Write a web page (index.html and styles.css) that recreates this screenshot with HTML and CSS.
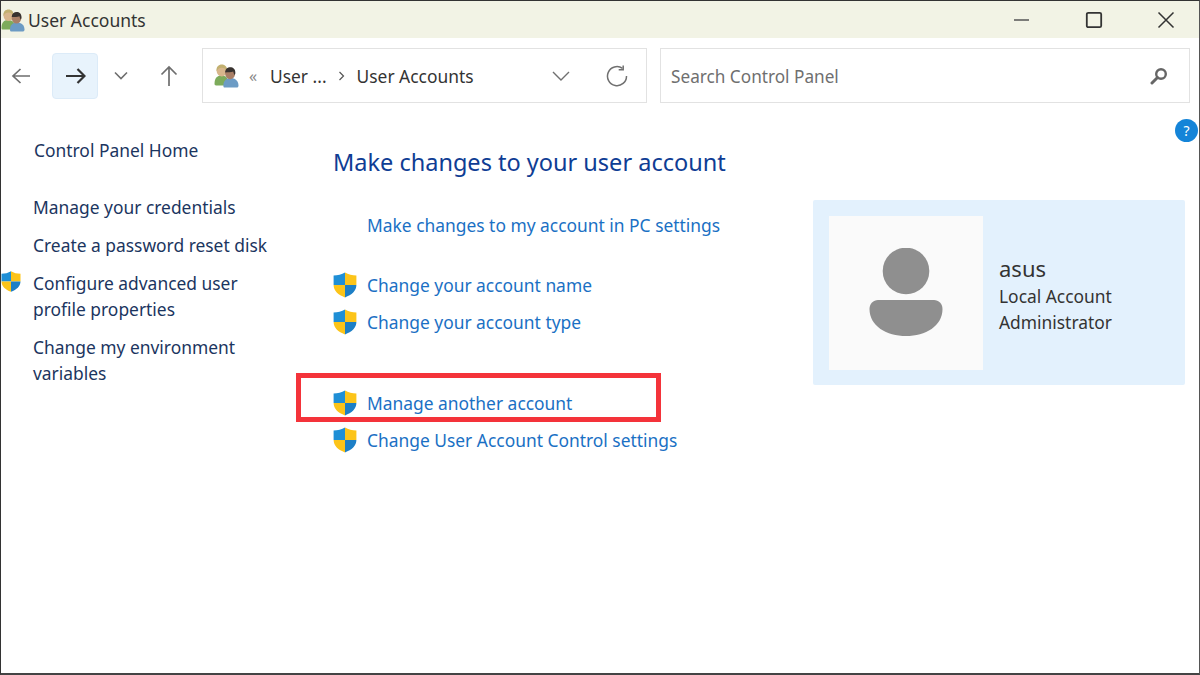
FILE: index.html
```html
<!DOCTYPE html>
<html lang="en">
<head>
  <meta charset="UTF-8">
  <title>User Accounts</title>
  <link rel="stylesheet" href="styles.css">
</head>
<body>
  <svg class="defs" width="0" height="0">
    <defs>
      <symbol id="shield" viewBox="0 0 24 26">
        <clipPath id="shield-clip"><path d="M12 .6C8.8 2.6 4.6 3.6.6 3.600v9.200c0 6 4.600 10.200 11.400 12.600 6.800-2.400 11.400-6.600 11.400-12.600V3.600c-4 0-8.200-1-11.400-3z"/></clipPath>
        <g clip-path="url(#shield-clip)">
          <rect width="12" height="13" fill="#1f8fd6"/>
          <rect x="12" width="12" height="13" fill="#fcc419"/>
          <rect y="13" width="12" height="13" fill="#fcc419"/>
          <rect x="12" y="13" width="12" height="13" fill="#1d7fc6"/>
        </g>
      </symbol>
      <symbol id="users" viewBox="0 0 24 24">
        <path d="M.5 20c0-5.500 2.500-8 6.500-8 3.500 0 5.500 1.500 6.500 4v5.500H2c-1 0-1.500-.5-1.500-1.500z" fill="#7dab5b"/>
        <ellipse cx="7.500" cy="7.500" rx="5" ry="5.500" fill="#d8b68c"/>
        <path d="M2.500 8C2 3.500 4.500 1.500 7.500 1.500s5.500 2 5 6.500c-1-2.500-3-3.500-5-3.500S3.500 5.500 2.500 8z" fill="#c2b070"/>
        <path d="M9 21.500c0-4.500 3-7 7-7s7.500 2.500 7.500 7c0 1.500-.8 2-2 2h-11c-1.200 0-1.500-.5-1.500-2z" fill="#6c9bc4"/>
        <ellipse cx="15.500" cy="10" rx="4.800" ry="5.500" fill="#a97f66"/>
        <path d="M10.700 9c.1-3.300 2.300-5 5-5s4.800 1.800 4.800 5.200c0 1-.3 1.800-.6 2.300-.8-.6-1.100-2.200-1.400-3.300-2 .7-5 .8-7.800.8z" fill="#38322f"/>
      </symbol>
    </defs>
  </svg>

  <div class="window">
    <header class="titlebar">
      <svg class="title-icon"><use href="#users"/></svg>
      <span class="title-text">User Accounts</span>
      <div class="window-controls">
        <svg class="ctl" viewBox="0 0 20 20"><path d="M2 10h15" stroke="#555" stroke-width="1.500" fill="none"/></svg>
        <svg class="ctl" viewBox="0 0 20 20"><rect x="2.800" y="2.800" width="14.400" height="14.400" rx="1.500" stroke="#333" stroke-width="1.800" fill="none"/></svg>
        <svg class="ctl" viewBox="0 0 20 20"><path d="M2.500 2.500l15 15M17.500 2.500l-15 15" stroke="#333" stroke-width="1.500" fill="none"/></svg>
      </div>
    </header>

    <nav class="toolbar">
      <div class="nav-btn back">
        <svg width="20" height="20" viewBox="0 0 20 20"><path d="M19 10H2M9.500 3L2 10l7.500 7" stroke="#6e6e6e" stroke-width="1.700" fill="none"/></svg>
      </div>
      <div class="nav-btn forward">
        <svg width="22" height="20" viewBox="0 0 22 20"><path d="M2 10h18M13.500 3l7 7-7 7" stroke="#333" stroke-width="2.200" fill="none"/></svg>
      </div>
      <div class="nav-btn recent">
        <svg width="14" height="10" viewBox="0 0 14 10"><path d="M1 1.500l6 6 6-6" stroke="#6e6e6e" stroke-width="1.600" fill="none"/></svg>
      </div>
      <div class="nav-btn up">
        <svg width="20" height="22" viewBox="0 0 20 22"><path d="M10 21V2M2.500 9.500L10 2l7.500 7.500" stroke="#6e6e6e" stroke-width="1.700" fill="none"/></svg>
      </div>
      <div class="address">
        <svg class="addr-icon"><use href="#users"/></svg>
        <span class="addr-sep">«</span>
        <span class="crumb">User ...</span>
        <svg class="crumb-arrow" width="8" height="10" viewBox="0 0 8 10"><path d="M1.500 1l4 4-4 4" stroke="#555" stroke-width="1.200" fill="none"/></svg>
        <span class="crumb current">User Accounts</span>
        <svg class="addr-drop" width="18" height="10" viewBox="0 0 18 10"><path d="M1 1l8 8 8-8" stroke="#707070" stroke-width="1.400" fill="none"/></svg>
        <svg class="addr-refresh" width="22" height="22" viewBox="0 0 22 22"><path d="M16.500 3.400A9.500 9.500 0 1 0 20.500 11" stroke="#707070" stroke-width="1.500" fill="none"/><path d="M17.200 .5v4.300h-4.500" stroke="#707070" stroke-width="1.500" fill="none"/></svg>
      </div>
      <div class="search">
        <span class="search-text">Search Control Panel</span>
        <svg width="18" height="18" viewBox="0 0 18 18"><circle cx="11" cy="7" r="4.800" stroke="#666" stroke-width="2.400" fill="none"/><path d="M7.500 10.500L2 16" stroke="#666" stroke-width="3" stroke-linecap="round"/></svg>
      </div>
    </nav>

    <div class="content">
      <aside class="sidebar">
        <a class="side-home">Control Panel Home</a>
        <a class="side-link">Manage your credentials</a>
        <a class="side-link">Create a password reset disk</a>
        <a class="side-link shielded">
          <svg class="side-shield"><use href="#shield"/></svg>
          Configure advanced user profile properties
        </a>
        <a class="side-link">Change my environment variables</a>
      </aside>

      <main class="main">
        <h1>Make changes to your user account</h1>
        <a class="task plain">Make changes to my account in PC settings</a>
        <div class="task-group first">
          <a class="task"><svg class="shield"><use href="#shield"/></svg>Change your account name</a>
          <a class="task"><svg class="shield"><use href="#shield"/></svg>Change your account type</a>
        </div>
        <div class="task-group second">
          <a class="task"><svg class="shield"><use href="#shield"/></svg>Manage another account</a>
          <a class="task"><svg class="shield"><use href="#shield"/></svg>Change User Account Control settings</a>
          <div class="highlight"></div>
        </div>
      </main>

      <section class="account-card">
        <div class="avatar">
          <svg width="74" height="90" viewBox="0 0 74 90">
            <circle cx="37" cy="23" r="23.300" fill="#8f8f8f"/>
            <path d="M9 52h56c4.500 0 8.500 3.500 8.500 9 0 17-17 27-36.500 27S.5 78 .5 61c0-5.500 4-9 8.500-9z" fill="#8f8f8f"/>
          </svg>
        </div>
        <div class="account-info">
          <div class="account-name">asus</div>
          <div class="account-line">Local Account</div>
          <div class="account-line">Administrator</div>
        </div>
      </section>

      <div class="help">?</div>
    </div>
  </div>
</body>
</html>
```

FILE: styles.css
```css
html, body {
  margin: 0;
  height: 100%;
}
body {
  font-family: "Noto Sans", "Open Sans", sans-serif;
  font-size: 17.400px;
  background: white;
  overflow: hidden;
}
.defs {
  position: absolute;
}
.window {
  box-sizing: border-box;
  width: 1200px;
  height: 675px;
  border-left: 1px solid #333;
  border-right: 1px solid #555;
  border-bottom: 2px solid #444;
  border-top: 1px solid #333;
  display: flex;
  flex-direction: column;
}
.titlebar {
  height: 37px;
  flex: none;
  background: #f2f3e5;
  display: flex;
  align-items: center;
}
.title-icon {
  width: 24px;
  height: 24px;
  margin-right: 3px;
}
.title-text {
  color: #333;
  font-size: 17.500px;
}
.window-controls {
  margin-left: auto;
  display: flex;
  gap: 52px;
  padding-right: 23px;
}
.ctl {
  width: 20px;
  height: 20px;
}

.toolbar {
  height: 77px;
  flex: none;
  display: flex;
  align-items: flex-start;
}
.nav-btn {
  display: flex;
  align-items: center;
  justify-content: center;
  margin-top: 15px;
  height: 46px;
}
.back {
  width: 39px;
}
.forward {
  width: 46px;
  margin-left: 12px;
  background: #e8f3fc;
  border: 1px solid #dcebf8;
  box-sizing: border-box;
  border-radius: 4px;
}
.recent {
  width: 46px;
}
.up {
  width: 50px;
  margin-right: 8px;
}
.address, .search {
  box-sizing: border-box;
  height: 55px;
  margin-top: 10px;
  border: 1px solid #e2e2e2;
  display: flex;
  align-items: center;
}
.address {
  width: 445px;
  padding-left: 11px;
  color: #333;
}
.addr-icon {
  width: 25px;
  height: 25px;
}
.addr-sep {
  margin-left: 10px;
  width: 10px;
  color: #888;
  font-size: 16px;
}
.crumb {
  margin-left: 11px;
}
.crumb.current {
  margin-left: 11px;
}
.crumb-arrow {
  margin-left: 11px;
}
.addr-drop {
  margin-left: auto;
}
.addr-refresh {
  margin-left: 36px;
  margin-right: 18px;
}
.search {
  width: 530px;
  margin-left: 13px;
  padding: 0 21px 0 10px;
  justify-content: space-between;
  color: #6f6f6f;
}
.search-text {
  font-size: 17.200px;
  padding-top: 1px;
}

.content {
  flex: 1;
  display: flex;
  position: relative;
}
.sidebar {
  width: 332px;
  flex: none;
  display: flex;
  flex-direction: column;
  line-height: 26px;
  color: #1b3560;
  padding-top: 22px;
  box-sizing: border-box;
}
.side-home {
  margin-left: 33px;
  margin-bottom: 31px;
}
.side-link {
  display: block;
  margin-left: 32px;
  margin-bottom: 12px;
  width: 236px;
}
.shielded {
  position: relative;
}
.side-shield {
  position: absolute;
  left: -32px;
  top: 0;
  width: 20px;
  height: 23px;
}
.main {
  width: 480px;
  flex: none;
}
.main h1 {
  margin: 30px 0 0;
  font-weight: 400;
  font-size: 23.500px;
  line-height: 34px;
  color: #0f3d94;
}
.task {
  display: flex;
  align-items: center;
  height: 26px;
  color: #1a70c4;
}
.task.plain {
  margin-top: 33px;
  padding-left: 34px;
}
.task-group {
  display: flex;
  flex-direction: column;
  gap: 11px;
  position: relative;
}
.task-group.first {
  margin-top: 34px;
}
.task-group.second {
  margin-top: 55px;
}
.shield {
  width: 24px;
  height: 26px;
  margin-right: 10px;
}
.highlight {
  position: absolute;
  left: -37px;
  top: -17px;
  width: 365px;
  height: 49px;
  box-sizing: border-box;
  border: 5px solid #f4333a;
}
.account-card {
  margin-top: 85px;
  width: 372px;
  height: 185px;
  box-sizing: border-box;
  padding: 16px;
  background: #e3f1fd;
  display: flex;
  align-items: center;
  border-radius: 2px;
}
.avatar {
  width: 154px;
  height: 154px;
  background: #fafafa;
  display: flex;
  align-items: center;
  justify-content: center;
}
.account-info {
  margin-left: 16px;
  color: #333;
  line-height: 26px;
}
.account-name {
  font-size: 22px;
  line-height: 30px;
  margin-top: 2px;
}
.help {
  position: absolute;
  left: 1174px;
  top: 4px;
  width: 23px;
  height: 23px;
  border-radius: 50%;
  background: #1484d8;
  color: white;
  font-size: 14px;
  line-height: 23px;
  text-align: center;
}
```
